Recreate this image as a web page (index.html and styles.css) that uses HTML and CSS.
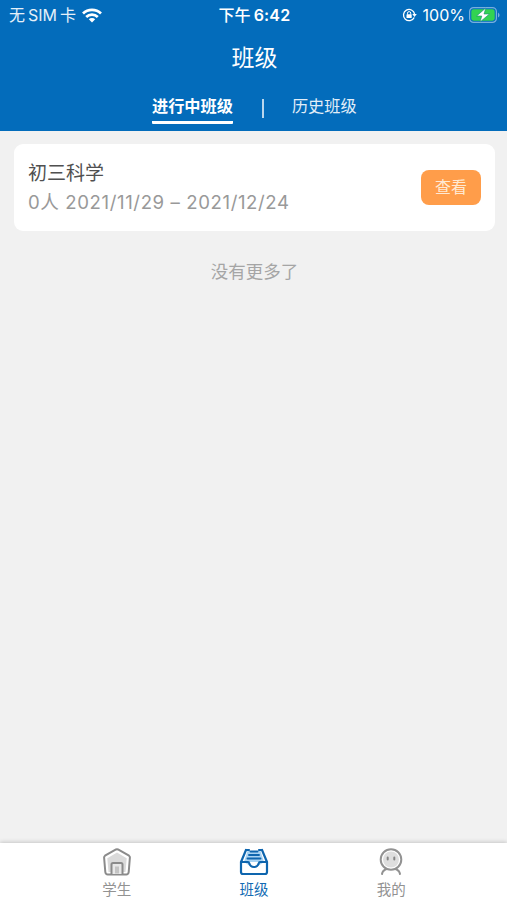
FILE: index.html
```html
<!DOCTYPE html>
<html lang="zh-CN">
  <head>
    <meta charset="UTF-8" />
    <meta name="viewport" content="width=device-width, initial-scale=1.0" />
    <title>班级</title>
    <link rel="stylesheet" href="styles.css">
  </head>
  <body>
    <div class="app">
      <header class="header">
        <div class="status-bar">
          <div class="carrier">
            <span class="carrier-name">无<span class="sim">SIM</span>卡</span>
            <svg class="wifi" viewBox="0 0 20 15" width="20" height="15">
              <g fill="none" stroke="#fff" stroke-width="2.7">
                <path d="M1 5.5a12.8 12.8 0 0 1 18 0" />
                <path d="M4.2 9a8.3 8.3 0 0 1 11.6 0" />
              </g>
              <path d="M6.8 11.3a4.6 4.6 0 0 1 6.4 0L10 14.5z" fill="#fff" />
            </svg>
          </div>
          <div class="time">下午<span class="clock">6:42</span></div>
          <div class="battery-info">
            <svg class="lock" viewBox="0 0 15 14" width="15" height="14">
              <path d="M12.2 9.4a5.6 5.6 0 1 1 .4-3.4" fill="none" stroke="#fff" stroke-width="1.3" />
              <path d="M10.3 6h4.5l-2.3 3z" fill="#fff" />
              <rect x="4.5" y="6.3" width="5.2" height="3.8" rx=".6" fill="#fff" />
              <path d="M5.5 6.5V5.2a1.6 1.6 0 0 1 3.2 0v1.3" fill="none" stroke="#fff" />
            </svg>
            <span class="percent">100%</span>
            <svg class="battery" viewBox="0 0 31 16" width="31" height="16">
              <rect x=".6" y=".6" width="26.8" height="14.8" rx="4" fill="none" stroke="#78aede" stroke-width="1.2" />
              <rect x="2.3" y="2.3" width="23.4" height="11.4" rx="2.4" fill="#32d351" />
              <path d="M29 5.5q1.6 1 1.6 2.5T29 10.5z" fill="#78aede" />
              <path d="M16.8 1L7.6 9h5.2L11 15 20.4 7H15z" fill="#fff" stroke="#168b72" stroke-width=".6" />
            </svg>
          </div>
        </div>
        <h1 class="title">班级</h1>
        <nav class="tabs">
          <a class="tab active">进行中班级</a>
          <span class="divider"></span>
          <a class="tab">历史班级</a>
        </nav>
      </header>

      <main class="content">
        <div class="card">
          <div class="card-info">
            <div class="card-name">初三科学</div>
            <div class="card-date">0人 2021/11/29 – 2021/12/24</div>
          </div>
          <button class="btn">查看</button>
        </div>
        <p class="no-more">没有更多了</p>
      </main>

      <footer class="tab-bar">
        <a class="bar-item">
          <svg viewBox="0 0 30 30" width="30" height="30">
            <path d="M14 2.5q1-.5 2 0l11 6.2q1 .7.9 1.8L26.700 25q-.3 2.500-2.500 2.500H5.800Q3.600 27.500 3.300 25L2.100 10.500q0-1.100.9-1.800z" fill="#fff" stroke="#8b8b8b" stroke-width="2" />
            <path d="M15 5.500l9.700 5.700L23.500 25h-17L5.300 11.200z" fill="#dadada" />
            <path d="M9.500 27v-9.500q0-1.500 1.500-1.500h8q1.500 0 1.500 1.500V27" fill="#e8e8e8" stroke="#8b8b8b" stroke-width="2" />
            <path d="M13 26.500v-7h4v7" fill="#c4c4c4" />
          </svg>
          <span>学生</span>
        </a>
        <a class="bar-item active">
          <svg viewBox="0 0 30 30" width="30" height="30">
            <path d="M5 15L8.500 4h13L25 15l-6 4h-8z" fill="#a9d3f3" />
            <g fill="none" stroke="#0e65ae" stroke-width="2.2" stroke-linejoin="round" stroke-linecap="round">
              <path d="M7 3L2 15v10q0 2 2 2h22q2 0 2-2V15L23 3" />
              <path d="M2 15h7q1 0 1.200 1 1 4 4.800 4t4.800-4q.2-1 1.200-1h7" fill="#fff" />
              <path d="M7 3h3M20 3h3" />
              <path d="M11.500 4.500h7M10 8h10M8.500 11.500h13" stroke-width="1.900" />
            </g>
          </svg>
          <span>班级</span>
        </a>
        <a class="bar-item">
          <svg viewBox="0 0 30 30" width="30" height="30">
            <circle cx="15" cy="12.5" r="10.3" fill="#fff" stroke="#929292" stroke-width="2" />
            <circle cx="15" cy="12.5" r="8" fill="#dedede" />
            <g fill="none" stroke="#858585" stroke-width="2" stroke-linecap="round">
              <path d="M11.700 10.500v2M18.300 10.500v2" />
              <path d="M10.500 22q-4 1.500-4.500 5M19.500 22q4 1.500 4.500 5" stroke="#929292" />
            </g>
          </svg>
          <span>我的</span>
        </a>
      </footer>
    </div>
  </body>
</html>
```

FILE: styles.css
```css
* {
  box-sizing: border-box;
}

body {
  margin: 0;
  font-family: Inter, "Noto Sans CJK SC", sans-serif;
  background-color: #f1f1f1;
}

.app {
  height: 100vh;
  display: flex;
  flex-direction: column;
  overflow: hidden;
}

.header {
  height: 131px;
  flex-shrink: 0;
  background-color: #036cbb;
  color: #ffffff;
}

.status-bar {
  height: 30px;
  padding: 0 7px 0 9px;
  display: grid;
  grid-template-columns: 1fr auto 1fr;
  align-items: center;
  font-size: 16px;
  line-height: 30px;
}

.carrier,
.battery-info {
  display: flex;
  align-items: center;
}

.carrier-name {
  color: #e5f0f9;
}

.sim {
  margin: 0 3px;
}

.wifi {
  margin-left: 6px;
}

.time {
  font-weight: 500;
}

.clock {
  margin-left: 3px;
  font-weight: 600;
  letter-spacing: 0.2px;
}

.battery-info {
  justify-content: flex-end;
}

.percent {
  margin: 0 4px 0 6px;
}

.title {
  margin: 10px 0 0;
  padding-left: 2px;
  font-size: 23px;
  font-weight: 400;
  line-height: 37px;
  text-align: center;
}

.tabs {
  display: flex;
  align-items: flex-start;
  padding: 17px 0 0 152px;
  font-size: 16.2px;
}

.tab {
  height: 30px;
  line-height: 25px;
  color: #e2eef8;
}

.tab.active {
  border-bottom: 3px solid #ffffff;
  border-radius: 1px;
  font-weight: 700;
  color: #ffffff;
}

.divider {
  width: 2px;
  height: 19px;
  margin: 5px 28px 0 29px;
  background-color: #b9d6ed;
}

.content {
  flex: 1;
  padding: 13px 12px 0 14px;
}

.card {
  height: 87px;
  padding: 0 14px;
  display: flex;
  align-items: center;
  justify-content: space-between;
  border-radius: 9px;
  background-color: #ffffff;
}

.card-name {
  font-size: 19px;
  line-height: 29px;
  color: #505050;
}

.card-date {
  font-size: 18.6px;
  line-height: 29px;
  letter-spacing: 0.6px;
  color: #999999;
}

.btn {
  width: 60px;
  height: 35px;
  padding: 0 0 3px;
  border: none;
  border-radius: 8px;
  font-family: inherit;
  font-size: 16px;
  color: #ffe9d3;
  background-color: #ff9d4a;
}

.no-more {
  margin: 27px 0 0;
  font-size: 17.5px;
  line-height: 28px;
  text-align: center;
  color: #a5a5a5;
}

.tab-bar {
  height: 57px;
  flex-shrink: 0;
  padding: 0 47px 0 48px;
  display: flex;
  background-color: #ffffff;
  box-shadow: 0 -1px 4px rgba(0, 0, 0, 0.18);
}

.bar-item {
  flex: 1;
  padding-top: 4px;
  display: flex;
  flex-direction: column;
  align-items: center;
  font-size: 14.5px;
  line-height: 25px;
  color: #929292;
}

.bar-item svg {
  flex-shrink: 0;
}

.bar-item.active {
  color: #136bb3;
}
```
